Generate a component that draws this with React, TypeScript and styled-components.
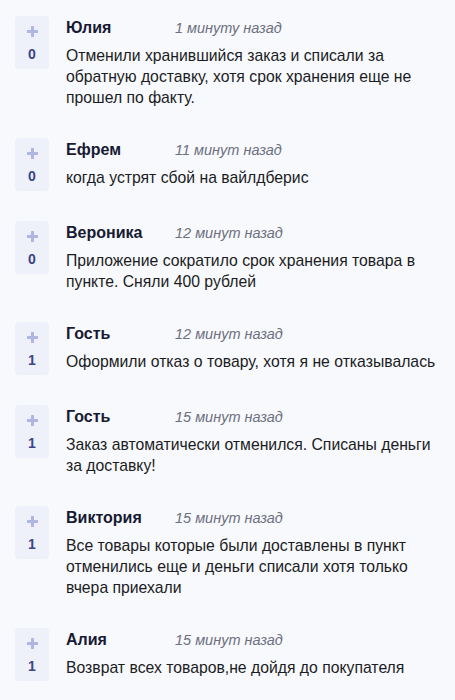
import React from 'react';
import styled, {createGlobalStyle} from 'styled-components';

const GlobalStyle = createGlobalStyle`
  html, body {
    margin: 0;
    padding: 0;
    background: #f8f9fc;
  }
  body {
    font-family: "Liberation Sans", Arial, sans-serif;
    color: #1b1c24;
  }
`

type Comment = {
    name: string
    time: string
    text: string
    votes: number
}

const comments: Comment[] = [
    {name: 'Юлия', time: '1 минуту назад', text: 'Отменили хранившийся заказ и списали за обратную доставку, хотя срок хранения еще не прошел по факту.', votes: 0},
    {name: 'Ефрем', time: '11 минут назад', text: 'когда устрят сбой на вайлдберис', votes: 0},
    {name: 'Вероника', time: '12 минут назад', text: 'Приложение сократило срок хранения товара в пункте. Сняли 400 рублей', votes: 0},
    {name: 'Гость', time: '12 минут назад', text: 'Оформили отказ о товару, хотя я не отказывалась', votes: 1},
    {name: 'Гость', time: '15 минут назад', text: 'Заказ автоматически отменился. Списаны деньги за доставку!', votes: 1},
    {name: 'Виктория', time: '15 минут назад', text: 'Все товары которые были доставлены в пункт отменились еще и деньги списали хотя только вчера приехали', votes: 1},
    {name: 'Алия', time: '15 минут назад', text: 'Возврат всех товаров,не дойдя до покупателя', votes: 1},
]

const List = styled.div`
  display: flex;
  flex-direction: column;
  gap: 30px;
  padding: 16px 12px 30px 15px;
`

const Item = styled.div`
  display: flex;
  align-items: flex-start;
  gap: 17px;
`

const VoteBox = styled.div`
  flex: none;
  width: 34px;
  height: 53px;
  border-radius: 4px;
  background: #eef0fa;
  display: flex;
  flex-direction: column;
  align-items: center;
  padding-top: 10px;
  box-sizing: border-box;
`

const VoteCount = styled.div`
  margin-top: 9px;
  font-size: 14px;
  font-weight: 700;
  color: #3b4687;
  line-height: 16px;
`

const Body = styled.div`
  flex: 1;
  padding-top: 2px;
`

const Header = styled.div`
  display: flex;
  align-items: baseline;
  height: 20px;
`

const Name = styled.div`
  width: 109px;
  font-size: 16px;
  font-weight: 700;
  color: #171a33;
  line-height: 20px;
`

const Time = styled.div`
  font-size: 14.5px;
  font-style: italic;
  color: #6c7080;
  line-height: 20px;
`

const Text = styled.div`
  margin-top: 7px;
  font-size: 15.75px;
  line-height: 21px;
  color: #1b1c24;
`

const PlusIcon = () => (
    <svg width="11" height="11" viewBox="0 0 11 11">
        <rect x="4" y="0" width="3" height="11" rx="0.5" fill="#afb6e4"/>
        <rect x="0" y="4" width="11" height="3" rx="0.5" fill="#afb6e4"/>
    </svg>
)

const App = () => {
    return <>
        <GlobalStyle/>
        <List>
            {comments.map((c, i) => (
                <Item key={i}>
                    <VoteBox>
                        <PlusIcon/>
                        <VoteCount>{c.votes}</VoteCount>
                    </VoteBox>
                    <Body>
                        <Header>
                            <Name>{c.name}</Name>
                            <Time>{c.time}</Time>
                        </Header>
                        <Text>{c.text}</Text>
                    </Body>
                </Item>
            ))}
        </List>
    </>
}

export default App
